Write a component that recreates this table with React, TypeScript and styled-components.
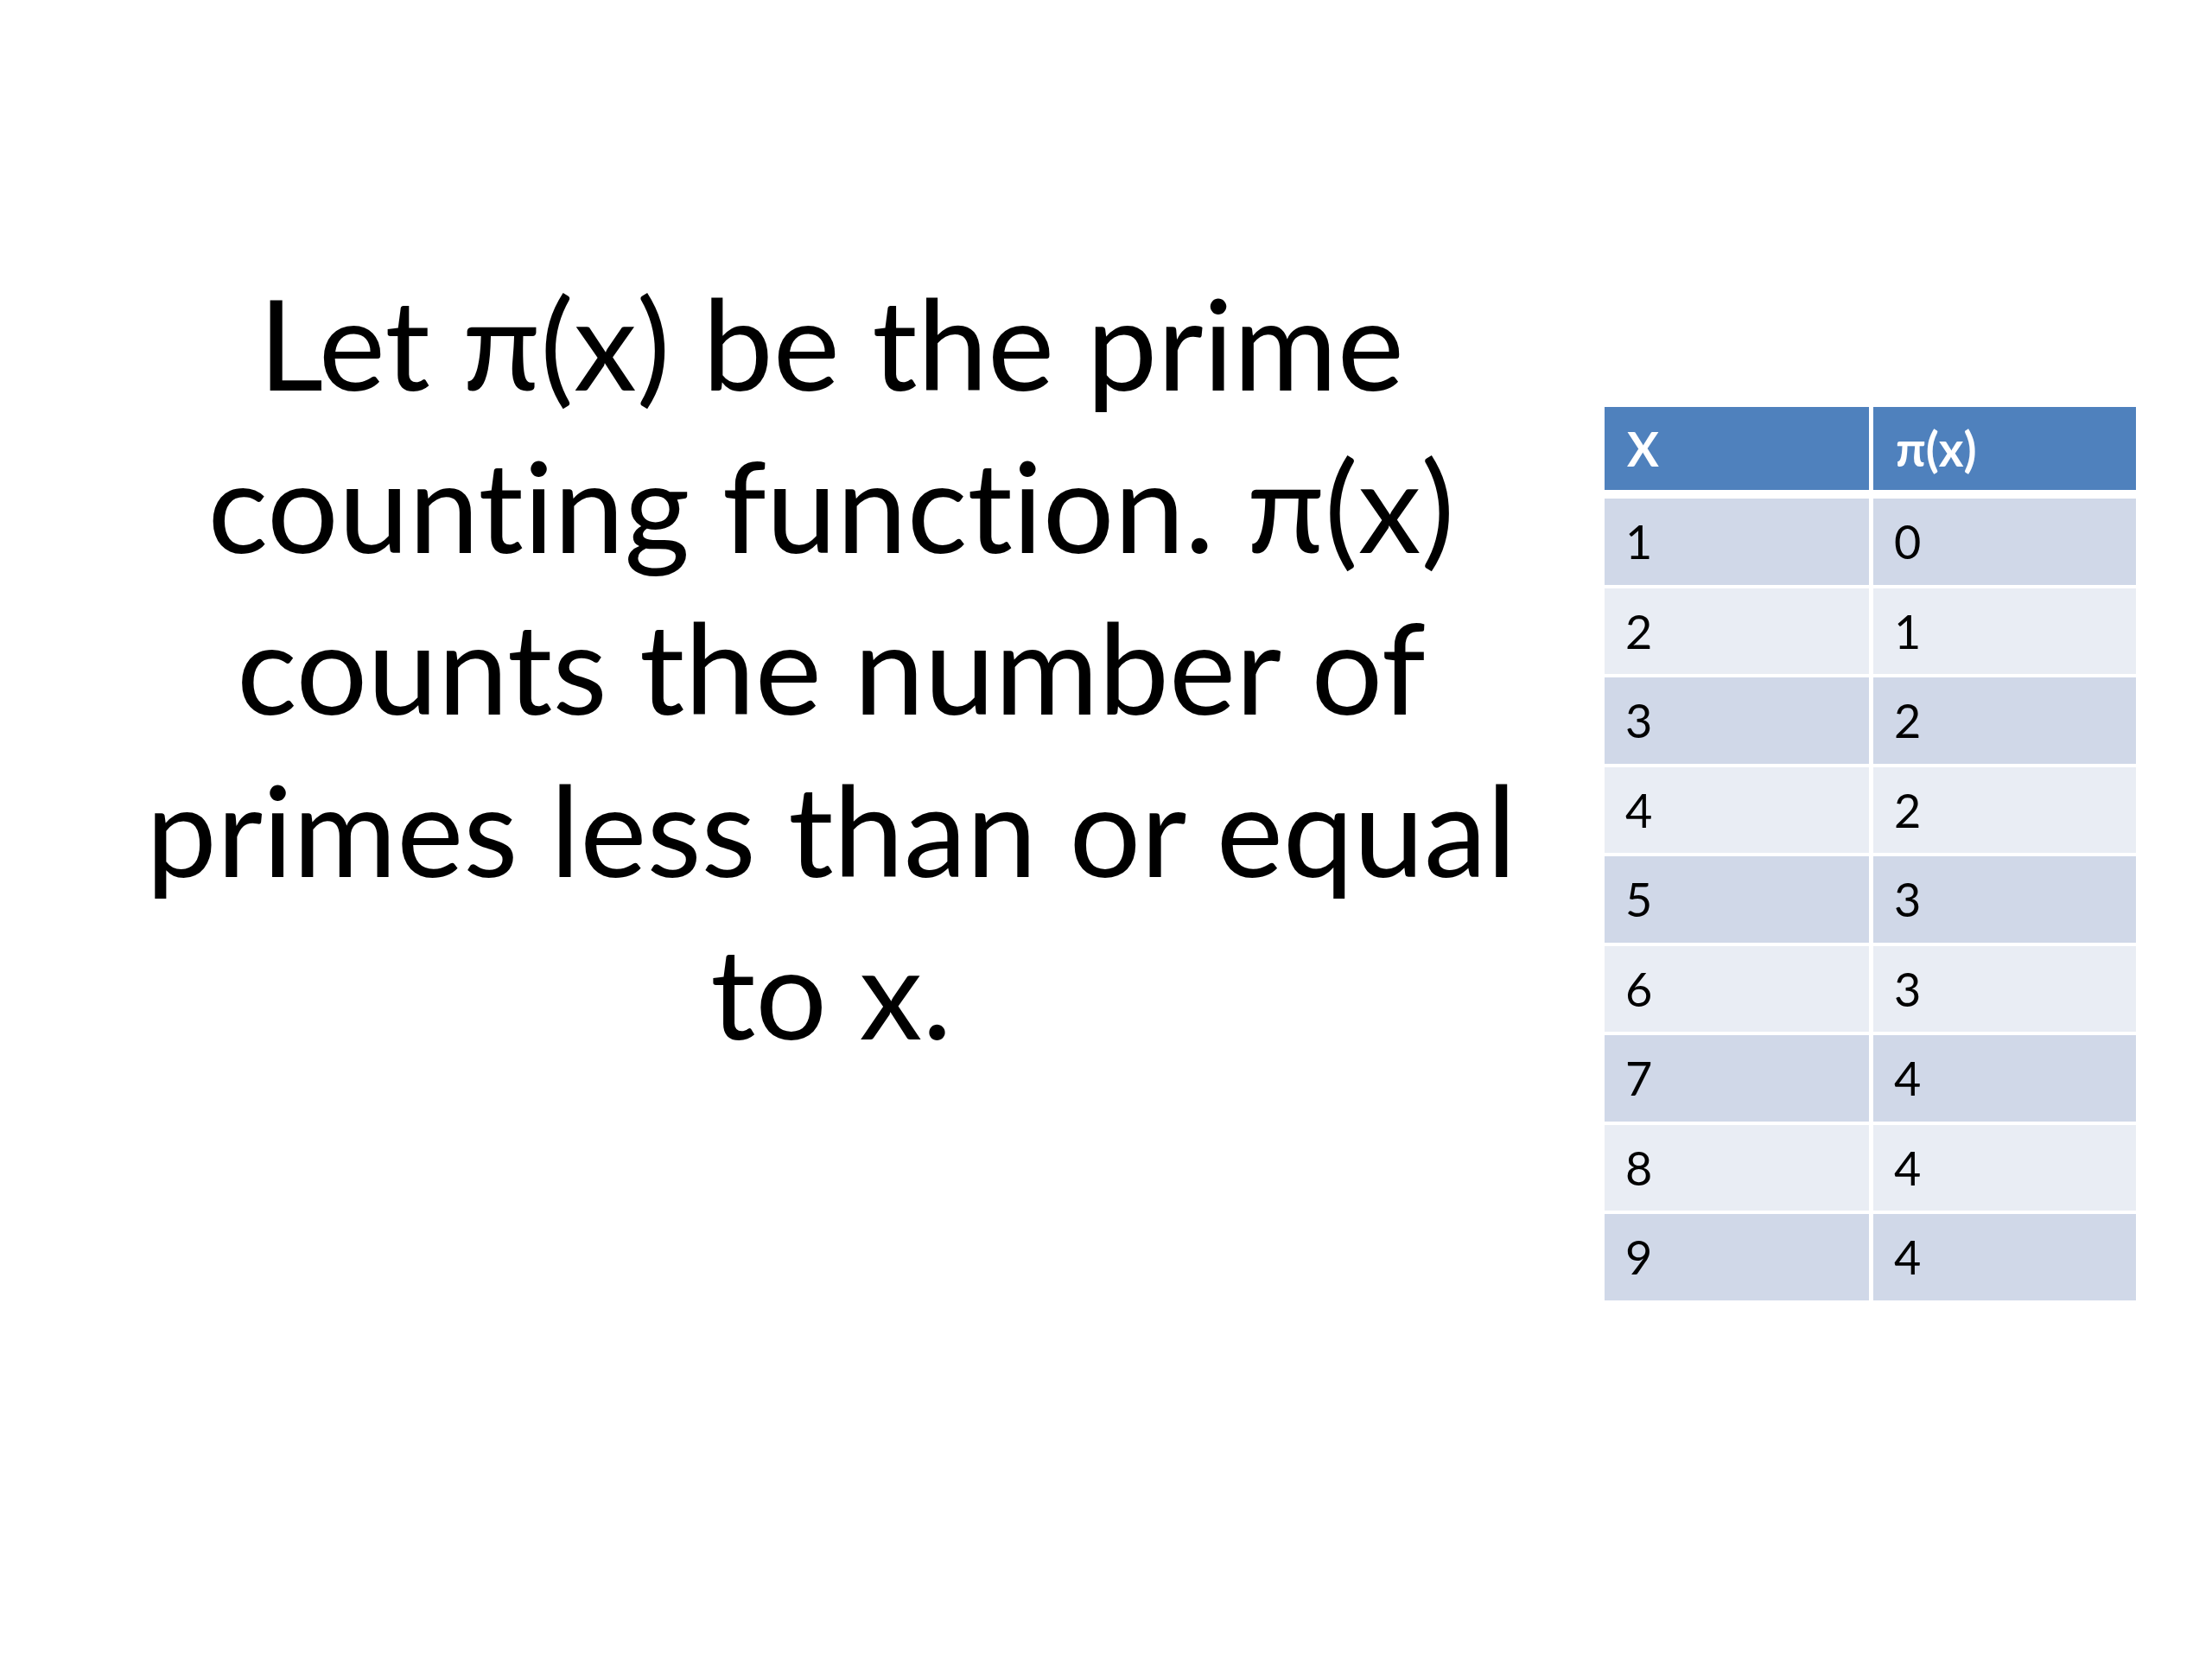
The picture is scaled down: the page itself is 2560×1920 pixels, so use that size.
import React from "react";
import styled, { createGlobalStyle } from "styled-components";

const GlobalStyle = createGlobalStyle`
  html, body {
    margin: 0;
    padding: 0;
    background: #ffffff;
  }
  body {
    font-family: Lato, "Open Sans", "DejaVu Sans", sans-serif;
    font-variant-ligatures: none;
  }
`;

const Slide = styled.main`
  width: 2560px;
  height: 1920px;
  background: #ffffff;
  display: flex;
  flex-direction: row;
  align-items: flex-start;
  box-sizing: border-box;
`;

const TextBlock = styled.div`
  margin-left: 148px;
  margin-top: 302px;
  width: 1628px;
  text-align: center;
  color: #000000;
  font-family: Lato, "Open Sans", sans-serif;
  font-size: 146px;
  line-height: 187.7px;
  white-space: nowrap;
  font-variant-ligatures: none;
`;

const Line = styled.div``;

const Table = styled.div`
  margin-left: 81px;
  margin-top: 471px;
  width: 615px;
  display: flex;
  flex-direction: column;
  font-family: Lato, "Open Sans", sans-serif;
`;

const HeaderRow = styled.div`
  display: grid;
  grid-template-columns: 306px 304px;
  column-gap: 5px;
  height: 96px;
  margin-bottom: 10px;
`;

const Body = styled.div`
  display: grid;
  grid-template-columns: 306px 304px;
  column-gap: 5px;
  grid-auto-rows: 99.5px;
  row-gap: 4px;
`;

const HeadCell = styled.div`
  background: #4f81bd;
  color: #ffffff;
  font-weight: 700;
  font-size: 55px;
  display: flex;
  align-items: center;
  padding-left: 26px;
  box-sizing: border-box;
`;

const Cell = styled.div<{ $odd: boolean }>`
  background: ${(p) => (p.$odd ? "#d0d8e8" : "#e9edf4")};
  color: #000000;
  font-size: 54px;
  display: flex;
  align-items: center;
  padding-left: 24px;
  box-sizing: border-box;
`;

const rows: [number, number][] = [
  [1, 0],
  [2, 1],
  [3, 2],
  [4, 2],
  [5, 3],
  [6, 3],
  [7, 4],
  [8, 4],
  [9, 4],
];

export default function App() {
  return (
    <>
      <GlobalStyle />
      <Slide>
        <TextBlock>
          <Line>Let π(x) be the prime</Line>
          <Line>counting function. π(x)</Line>
          <Line>counts the number of</Line>
          <Line>primes less than or equal</Line>
          <Line>to x.</Line>
        </TextBlock>
        <Table>
          <HeaderRow>
            <HeadCell>X</HeadCell>
            <HeadCell>π(x)</HeadCell>
          </HeaderRow>
          <Body>
            {rows.map(([x, p], i) => (
              <React.Fragment key={x}>
                <Cell $odd={i % 2 === 0}>{x}</Cell>
                <Cell $odd={i % 2 === 0}>{p}</Cell>
              </React.Fragment>
            ))}
          </Body>
        </Table>
      </Slide>
    </>
  );
}
